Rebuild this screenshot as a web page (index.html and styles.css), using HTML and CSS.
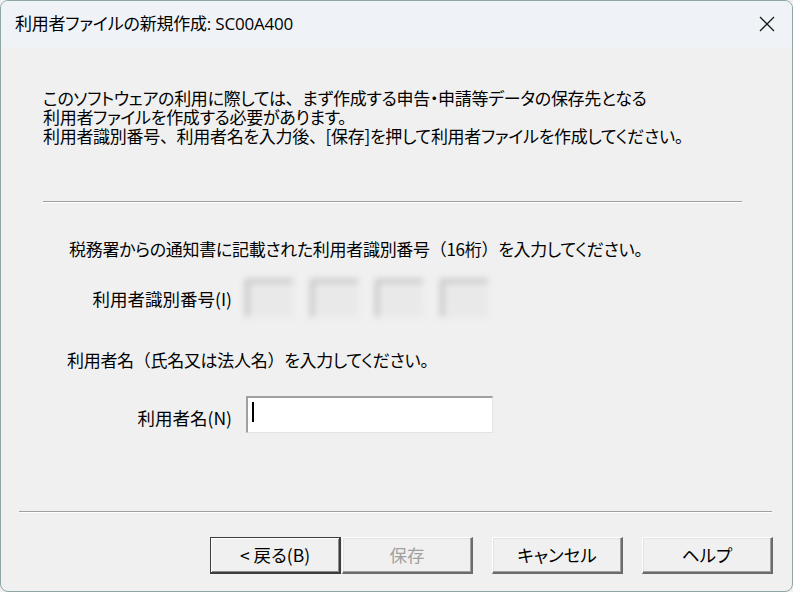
FILE: index.html
```html
<!DOCTYPE html>
<html lang="ja">
<head>
<meta charset="utf-8">
<title>利用者ファイルの新規作成</title>
<link rel="stylesheet" href="styles.css">
</head>
<body>
<div class="window">
  <div class="titlebar">
    <span class="title">利用者ファイルの新規作成: SC00A400</span>
    <span class="close" aria-label="閉じる">
      <svg width="16" height="16" viewBox="0 0 16 16"><path d="M1 1 L15 15 M15 1 L1 15" stroke="#1b1b1b" stroke-width="1.3" fill="none"/></svg>
    </span>
  </div>
  <div class="main">
    <p class="intro">このソフトウェアの利用に際しては<span class="fw">、</span>まず作成する申告・申請等データの保存先となる<br>利用者ファイルを作成する必要があります。<br>利用者識別番号<span class="fw">、</span>利用者名を入力後<span class="fw">、</span>[保存]を押して利用者ファイルを作成してください。</p>
    <div class="sep sep-top"></div>
    <p class="prompt prompt-id">税務署からの通知書に記載された利用者識別番号<span class="fw">（</span>16桁<span class="fw">）</span>を入力してください。</p>
    <div class="field-row row-id">
      <span class="label">利用者識別番号(I)</span>
      <div class="id-fields">
        <span class="id-box"></span>
        <span class="id-box"></span>
        <span class="id-box"></span>
        <span class="id-box"></span>
      </div>
    </div>
    <p class="prompt prompt-name">利用者名<span class="fw">（</span>氏名又は法人名<span class="fw">）</span>を入力してください。</p>
    <div class="field-row row-name">
      <span class="label label-name">利用者名(N)</span>
      <div class="input"><span class="caret"></span></div>
    </div>
    <div class="sep sep-bottom"></div>
    <div class="buttons">
      <button class="btn btn-default">&lt; 戻る(B)</button>
      <button class="btn btn-disabled">保存</button>
      <button class="btn btn-gap">キャンセル</button>
      <button class="btn btn-gap">ヘルプ</button>
    </div>
  </div>
</div>
</body>
</html>
```
FILE: styles.css
```css
html, body {
  margin: 0;
  padding: 0;
  background: #f0f0f0;
}
body {
  font-family: "Noto Sans CJK JP", sans-serif;
  color: #000;
}
.window {
  width: 793px;
  height: 592px;
  box-sizing: border-box;
  border: 1px solid #8ea5a5;
  border-radius: 8px;
  overflow: hidden;
  display: flex;
  flex-direction: column;
  background: #f0f0f0;
}
.titlebar {
  height: 46px;
  flex: none;
  background: #eff3f8;
  display: flex;
  align-items: center;
  justify-content: space-between;
  padding: 0 17px 0 14px;
}
.title {
  font-family: "Open Sans", "Noto Sans CJK JP", sans-serif;
  font-size: 17px;
  font-feature-settings: "palt";
  letter-spacing: -0.2px;
  margin-top: -3px;
}
.close {
  display: flex;
  width: 16px;
  height: 16px;
}
.main {
  flex: 1;
  display: flex;
  flex-direction: column;
  padding-top: 41px;
  font-size: 17px;
  line-height: 19px;
  letter-spacing: -0.3px;
  font-feature-settings: "palt";
}
.fw {
  font-feature-settings: normal;
}
p { margin: 0; }
.intro {
  padding-left: 42px;
}
.sep {
  height: 0;
  border-top: 1px solid #a0a0a0;
  border-bottom: 1px solid #ffffff;
}
.sep-top {
  margin: 56px 50px 0 42px;
}
.prompt-id {
  margin-top: 36px;
  padding-left: 68px;
}
.field-row {
  display: grid;
  grid-template-columns: 231px auto;
  column-gap: 13px;
  align-items: center;
}
.label {
  text-align: right;
  font-size: 17.5px;
  letter-spacing: 0;
}
.row-id {
  margin-top: 20px;
  height: 40px;
}
.id-fields {
  display: flex;
  gap: 17px;
}
.id-box {
  width: 48px;
  height: 38px;
  box-sizing: border-box;
  background: #e9e9e9;
  border-top: 4px solid #c4c4c4;
  border-left: 4px solid #c4c4c4;
  filter: blur(3px);
}
.prompt-name {
  margin-top: 32px;
  padding-left: 66px;
}
.row-name {
  margin-top: 27px;
  grid-template-columns: 231px auto;
  column-gap: 14px;
}
.label-name {
  padding-top: 6px;
}
.input {
  width: 247px;
  height: 37px;
  box-sizing: border-box;
  background: #fff;
  border-top: 2px solid #a0a0a0;
  border-left: 2px solid #a0a0a0;
  border-right: 1px solid #e3e3e3;
  border-bottom: 1px solid #e3e3e3;
  padding: 4px 0 0 4px;
}
.caret {
  display: block;
  width: 2px;
  height: 20px;
  background: #000;
}
.sep-bottom {
  margin: 78px 20px 0 18px;
}
.buttons {
  margin-top: 24px;
  display: flex;
  justify-content: flex-end;
  padding-right: 19px;
}
.btn {
  width: 131px;
  height: 37px;
  box-sizing: border-box;
  font-family: "Noto Sans CJK JP", sans-serif;
  font-size: 17.5px;
  font-feature-settings: "palt";
  color: #000;
  background: #f0f0f0;
  border-style: solid;
  border-width: 1px 2px 2px 1px;
  border-color: #ffffff #6b6b6b #6b6b6b #ffffff;
  box-shadow: inset -1px -1px 0 #a0a0a0, inset 1px 1px 0 #e3e3e3;
  padding: 0 0 2px 0;
  margin: 0;
}
.btn-default {
  border: 1px solid #3c3c3c;
  border-right-width: 2px;
  border-bottom-width: 2px;
  box-shadow: inset 1px 1px 0 #ffffff, inset -1px -1px 0 #8a8a8a;
}
.btn-disabled {
  color: #a0a0a0;
  margin-left: 1px;
}
.btn-gap {
  margin-left: 19px;
}
```
